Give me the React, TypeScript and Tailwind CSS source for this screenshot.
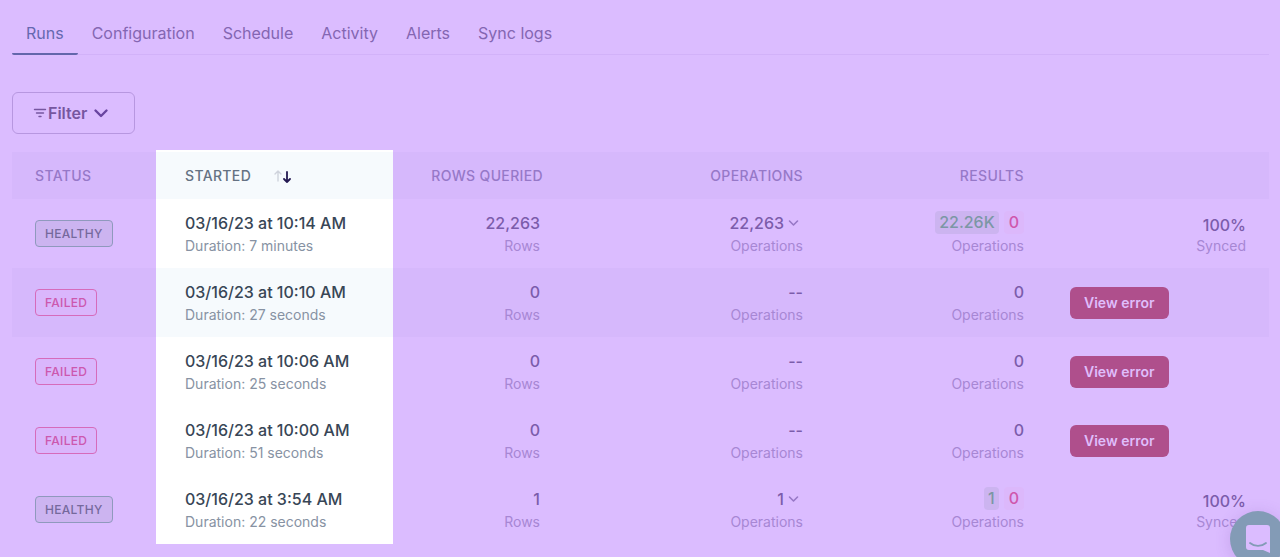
import clsx from "clsx";

type Run = {
  status: "HEALTHY" | "FAILED";
  started: string;
  duration: string;
  rows: string;
  operations: string;
  added?: string;
};

const tabs = ["Runs", "Configuration", "Schedule", "Activity", "Alerts", "Sync logs"];

const runs: Run[] = [
  { status: "HEALTHY", started: "03/16/23 at 10:14 AM", duration: "7 minutes", rows: "22,263", operations: "22,263", added: "22.26K" },
  { status: "FAILED", started: "03/16/23 at 10:10 AM", duration: "27 seconds", rows: "0", operations: "--" },
  { status: "FAILED", started: "03/16/23 at 10:06 AM", duration: "25 seconds", rows: "0", operations: "--" },
  { status: "FAILED", started: "03/16/23 at 10:00 AM", duration: "51 seconds", rows: "0", operations: "--" },
  { status: "HEALTHY", started: "03/16/23 at 3:54 AM", duration: "22 seconds", rows: "1", operations: "1", added: "1" },
];

const Tabs = () => {
  return (
    <nav className="flex border-b border-[#d2b2f9]">
      {tabs.map((tab, i) => (
        <a
          key={tab}
          href="#"
          className={clsx(
            "-mb-px px-3.5 pt-5 pb-[7px] text-base leading-[26px]",
            i === 0
              ? "rounded-b-xs border-b-2 border-[#6366ab] text-[#6668b0]"
              : "border-b-2 border-transparent text-[#8466b2]"
          )}
        >
          {tab}
        </a>
      ))}
    </nav>
  );
};

const FilterButton = () => {
  return (
    <button
      type="button"
      className="mt-[37px] flex h-[42px] w-[123px] items-center rounded-md border border-[#b797e0] pl-5 text-base font-semibold text-[#7656a0]"
    >
      <svg className="mr-px" width="14" height="14" viewBox="0 0 14 14" fill="none" stroke="currentColor" strokeWidth="1.4" strokeLinecap="round">
        <path d="M1.5 3.5h11M3.5 7h7M6 10.5h2" />
      </svg>
      Filter
      <svg className="ml-1.5" width="16" height="16" viewBox="0 0 16 16" fill="none" stroke="#6944a0" strokeWidth="2.4" strokeLinecap="round" strokeLinejoin="round">
        <path d="M2.5 5.5 8 11l5.5-5.5" />
      </svg>
    </button>
  );
};

const SortArrows = () => {
  return (
    <svg width="20" height="14" viewBox="0 0 20 14" fill="none" strokeLinecap="round" strokeLinejoin="round">
      <path stroke="#cfd3dc" strokeWidth="1.4" d="M5 12V2M2 5l3-3 3 3" />
      <path stroke="#241a52" strokeWidth="1.8" d="M14 3v10M11 10l3 3 3-3" />
    </svg>
  );
};

const Status = ({ status }: { status: Run["status"] }) => {
  return (
    <span
      className={clsx(
        "inline-flex h-[27px] items-center rounded border px-[9px] text-xs font-medium tracking-wide",
        status === "HEALTHY"
          ? "border-[#8f99bd] bg-[#ccb4f0] text-[#75699c]"
          : "border-[#d66bbb] bg-[#dab6fc] text-[#cc58ae]"
      )}
    >
      {status}
    </span>
  );
};

const Metric = ({ children, label, compact }: { children: React.ReactNode; label: string; compact?: boolean }) => {
  return (
    <div className="flex flex-col items-end text-[#7b5cab]">
      <div className="flex h-6 items-center text-base font-medium">{children}</div>
      <div className={clsx("text-sm text-[#a787d4]", compact ? "leading-[18px]" : "leading-[22px]")}>{label}</div>
    </div>
  );
};

const RunRow = ({ run, striped }: { run: Run; striped: boolean }) => {
  return (
    <tr className={clsx("h-[69px]", striped && "bg-[#d6b8fc]")}>
      <td className="pl-[23px]">
        <Status status={run.status} />
      </td>
      <td className={clsx("pl-[29px]", striped ? "bg-[#f6fafd]" : "bg-white")}>
        <div className="text-base font-medium text-[#384656]">{run.started}</div>
        <div className="text-sm leading-[22px] text-[#8792a3]">Duration: {run.duration}</div>
      </td>
      <td className="pr-[3px]">
        <Metric label="Rows">{run.rows}</Metric>
      </td>
      <td>
        <Metric label="Operations">
          {run.operations}
          {run.added && (
            <svg className="mx-1" width="11" height="8" viewBox="0 0 11 8" fill="none" stroke="#9778c6" strokeWidth="1.6" strokeLinecap="round" strokeLinejoin="round">
              <path d="M1.5 2 5.500 6l4-4" />
            </svg>
          )}
        </Metric>
      </td>
      <td>
        <Metric label="Operations">
          {run.added ? (
            <>
              <span className="rounded bg-[#ccb4f0] px-1 leading-[23px] text-[#7c97a5]">{run.added}</span>
              <span className="ml-[5px] rounded bg-[#dcb8fb] px-[5px] leading-[23px] text-[#cf57ac]">0</span>
            </>
          ) : (
            run.rows
          )}
        </Metric>
      </td>
      <td className="pl-[46px]">
        {run.status === "FAILED" && (
          <button type="button" className="h-8 rounded-md bg-[#af4f8c] px-3.5 text-sm font-semibold text-[#dfbdfb]">
            View error
          </button>
        )}
      </td>
      <td className="pr-[23px]">
        {run.added && <Metric label="Synced" compact>100%</Metric>}
      </td>
    </tr>
  );
};

const RunsTable = () => {
  return (
    <table className="mt-[18px] w-full table-fixed">
      <thead>
        <tr className="h-[47px] bg-[#d6b8fc] text-left text-sm tracking-wide text-[#9678c8] *:font-medium">
          <th className="w-36 pl-[23px]">STATUS</th>
          <th className="w-[237px] bg-[#f6fafd] pl-[29px] text-[#647283] shadow-[0_-2px_0_white]">
            <button type="button" className="flex items-center gap-[22px] tracking-wide">
              STARTED
              <SortArrows />
            </button>
          </th>
          <th className="w-[150px] text-right">ROWS QUERIED</th>
          <th className="w-[260px] text-right">OPERATIONS</th>
          <th className="w-[221px] text-right">RESULTS</th>
          <th />
          <th className="w-[100px]" />
        </tr>
      </thead>
      <tbody>
        {runs.map((run, i) => (
          <RunRow key={run.started} run={run} striped={i === 1} />
        ))}
      </tbody>
    </table>
  );
};

const ChatButton = () => {
  return (
    <button
      type="button"
      aria-label="Open chat"
      className="fixed -right-[6px] -bottom-[10px] flex size-14 items-center justify-center rounded-full bg-[#839bb6] shadow-[0_2px_16px_rgba(110,70,160,0.2)]"
    >
      <svg width="26" height="30" viewBox="0 0 26 30" fill="none">
        <path fill="#dbbcff" d="M4 1h18a3 3 0 0 1 3 3v25l-7-3H4a3 3 0 0 1-3-3V4a3 3 0 0 1 3-3Z" />
        <path stroke="#839bb6" strokeWidth="1.8" strokeLinecap="round" d="M5 19c4.500 3.800 11.500 3.800 16 0" />
      </svg>
    </button>
  );
};

export default function App() {
  return (
    <div className="min-h-screen bg-[#dbbcff] pr-[11px] pb-3 pl-3 font-['Inter',sans-serif]">
      <Tabs />
      <FilterButton />
      <RunsTable />
      <ChatButton />
    </div>
  );
}
